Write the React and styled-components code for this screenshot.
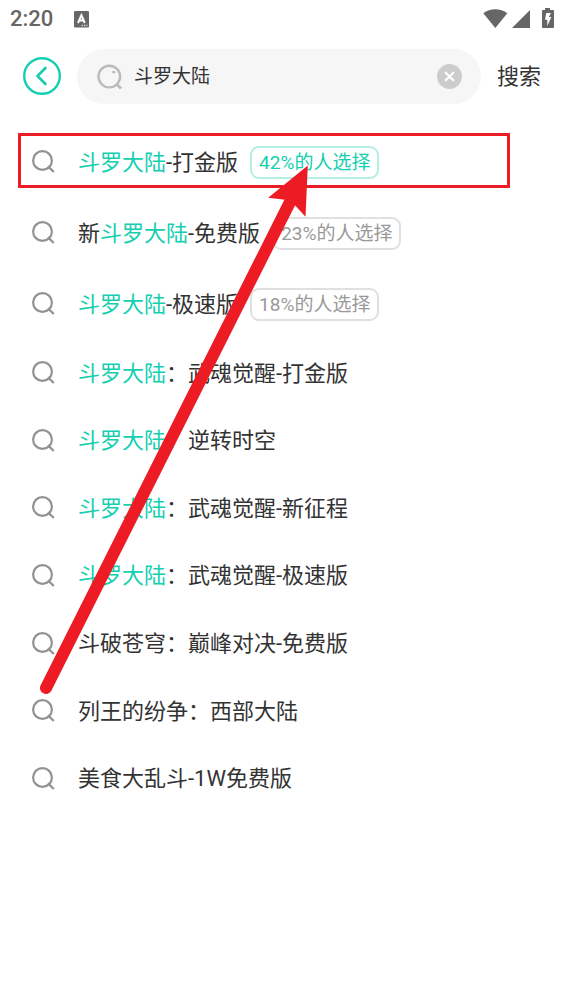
import React, { useState } from 'react';
import styled, { createGlobalStyle } from 'styled-components';

const GlobalStyle = createGlobalStyle`
  * { box-sizing: border-box; }
  body {
    margin: 0;
    background: #fff;
    color: #333;
    font-family: Roboto, "Noto Sans CJK SC", sans-serif;
    font-size: 22px;
    -webkit-font-smoothing: antialiased;
  }
  button, input { font: inherit; color: inherit; }
`;

const Screen = styled.div`
  position: relative;
  min-height: 100vh;
`;

const StatusBar = styled.div`
  display: flex;
  align-items: center;
  justify-content: space-between;
  height: 38px;
  padding: 0 9px 0 10px;
  color: #666;
`;

const StatusGroup = styled.div`
  display: flex;
  align-items: center;
  gap: ${(p) => p.$gap}px;
`;

const Clock = styled.span`
  font-weight: 500;
  line-height: 40px;
`;

const Header = styled.form`
  display: flex;
  align-items: center;
  gap: 16px;
  margin: 0;
  padding: 11px 23px 23px;
`;

const PlainButton = styled.button`
  display: flex;
  align-items: center;
  flex: none;
  padding: 0;
  border: 0;
  background: none;
  cursor: pointer;
  line-height: 32px;
`;

const SearchField = styled.label`
  display: flex;
  align-items: center;
  flex: 1;
  min-width: 0;
  height: 55px;
  padding: 0 19px;
  gap: 10px;
  border-radius: 28px;
  background: #f6f6f6;
`;

const SearchInput = styled.input`
  flex: 1;
  min-width: 0;
  height: 32px;
  padding: 0;
  border: 0;
  outline: 0;
  background: none;
  font-size: 19px;
  line-height: 32px;
`;

const Results = styled.ul`
  display: grid;
  grid-template-rows: repeat(3, 71px);
  grid-auto-rows: 1fr;
  min-height: 686px;
  margin: 0;
  padding: 0;
  list-style: none;
`;

const Row = styled.li`
  position: relative;
  display: flex;
  align-items: center;
`;

const Highlight = styled.span`
  position: absolute;
  inset: 6px 54px 10px 18px;
  border: 3px solid #ed1c24;
  pointer-events: none;
`;

const RowLink = styled.a`
  display: flex;
  align-items: center;
  flex: 1;
  padding: 0 31px;
  color: inherit;
  text-decoration: none;
  white-space: nowrap;
`;

const Title = styled.span`
  margin: 0 12px 0 22px;
  line-height: 32px;
`;

const Match = styled.span`
  color: #14cfb0;
`;

const Tag = styled.span`
  padding: 1px 7px 0;
  border: 2px solid ${(p) => (p.$active ? '#b4efe5' : '#e0e0e0')};
  border-radius: 9px;
  color: ${(p) => (p.$active ? '#14cfb0' : '#999')};
  font-size: 19px;
  line-height: 28px;
`;

const Arrow = styled.svg`
  position: absolute;
  left: 0;
  top: 0;
  pointer-events: none;
`;

const Glass = () => (
  <svg width="25" height="27" viewBox="0 0 25 27" fill="none" stroke="#929292" strokeWidth="2.2" aria-hidden="true">
    <circle cx="11.5" cy="11.5" r="9.4" />
    <path d="M17 17.4l5.8 5.6" />
  </svg>
);

const RESULTS = [
  { text: '斗罗大陆-打金版', share: '42%', active: true },
  { text: '新斗罗大陆-免费版', share: '23%' },
  { text: '斗罗大陆-极速版', share: '18%' },
  { text: '斗罗大陆：武魂觉醒-打金版' },
  { text: '斗罗大陆：逆转时空' },
  { text: '斗罗大陆：武魂觉醒-新征程' },
  { text: '斗罗大陆：武魂觉醒-极速版' },
  { text: '斗破苍穹：巅峰对决-免费版' },
  { text: '列王的纷争：西部大陆' },
  { text: '美食大乱斗-1W免费版' },
];

const KEYWORD = '斗罗大陆';

function Highlighted({ text }) {
  const at = text.indexOf(KEYWORD);
  if (at < 0) return text;
  return (
    <>
      {text.slice(0, at)}
      <Match>{KEYWORD}</Match>
      {text.slice(at + KEYWORD.length)}
    </>
  );
}

export default function App() {
  const [query, setQuery] = useState(KEYWORD);
  return (
    <Screen>
      <GlobalStyle />
      <StatusBar>
        <StatusGroup $gap={21}>
          <Clock>2:20</Clock>
          <svg width="15" height="17" viewBox="0 0 15 17" aria-hidden="true">
            <rect width="15" height="16.5" rx="1.2" fill="#666" />
            <path d="M4 12L7.4 4.2L10.8 12M5.2 9.6H9.6" fill="none" stroke="#fff" strokeWidth="2" />
            <path d="M7.5 14.5h1.4M10 14.5h1.4M12.4 14.5h1" stroke="#ddd" strokeWidth="1.4" />
          </svg>
        </StatusGroup>
        <svg width="72" height="22" viewBox="0 0 72 22" fill="#666" aria-hidden="true">
          <path d="M0.3 5.3C7-.2 17.6-.2 24.3 5.3L12.3 20z" />
          <path d="M47 2v18H29z" />
          <path fillRule="evenodd" d="M62 0h5v2h3q1 0 1 1v16q0 1-1 1H60q-1 0-1-1V3q0-1 1-1h2zM63.2 5L62 11.7h2.3V18L68.4 9h-2.5l2-4z" />
        </svg>
      </StatusBar>
      <Header role="search" onSubmit={(e) => e.preventDefault()}>
        <PlainButton type="button" aria-label="返回">
          <svg width="38" height="40" viewBox="0 0 38 40" fill="none" stroke="#14cfb0" aria-hidden="true">
            <circle cx="19" cy="19" r="17.8" strokeWidth="2.4" />
            <path d="M22.5 11L14.5 19L22.5 27" strokeWidth="2.6" strokeLinecap="round" strokeLinejoin="round" />
          </svg>
        </PlainButton>
        <SearchField>
          <svg width="28" height="28" viewBox="0 0 28 28" fill="none" stroke="#bbb" strokeWidth="2.4" aria-hidden="true">
            <circle cx="13.3" cy="13.6" r="10.8" />
            <path d="M20.8 21.3L25 25.5" strokeWidth="2.8" />
            <path d="M16.2 9.1h3" strokeWidth="2.2" />
          </svg>
          <SearchInput aria-label="搜索内容" value={query} onChange={(e) => setQuery(e.target.value)} />
          <PlainButton type="button" aria-label="清除" onClick={() => setQuery('')}>
            <svg width="25" height="25" viewBox="0 0 25 25" aria-hidden="true">
              <circle cx="12.5" cy="12.5" r="12.5" fill="#ccc" />
              <path d="M8.7 8.7l7.6 7.6M16.3 8.7l-7.6 7.6" stroke="#fff" strokeWidth="2.2" strokeLinecap="round" />
            </svg>
          </PlainButton>
        </SearchField>
        <PlainButton type="submit">搜索</PlainButton>
      </Header>
      <Results>
        {RESULTS.map((item) => (
          <Row key={item.text}>
            <RowLink href="#">
              <Glass />
              <Title><Highlighted text={item.text} /></Title>
              {item.share && <Tag $active={item.active}>{item.share}的人选择</Tag>}
            </RowLink>
            {item.active && <Highlight />}
          </Row>
        ))}
      </Results>
      <Arrow width="320" height="700" viewBox="0 0 320 700" fill="#ed1c24" aria-hidden="true">
        <path d="M46 688L290 202" stroke="#ed1c24" strokeWidth="12" strokeLinecap="round" />
        <path d="M307.8 165.5L305.5 216.7L294.7 205L285 199.7L268.2 197.8z" />
      </Arrow>
    </Screen>
  );
}
